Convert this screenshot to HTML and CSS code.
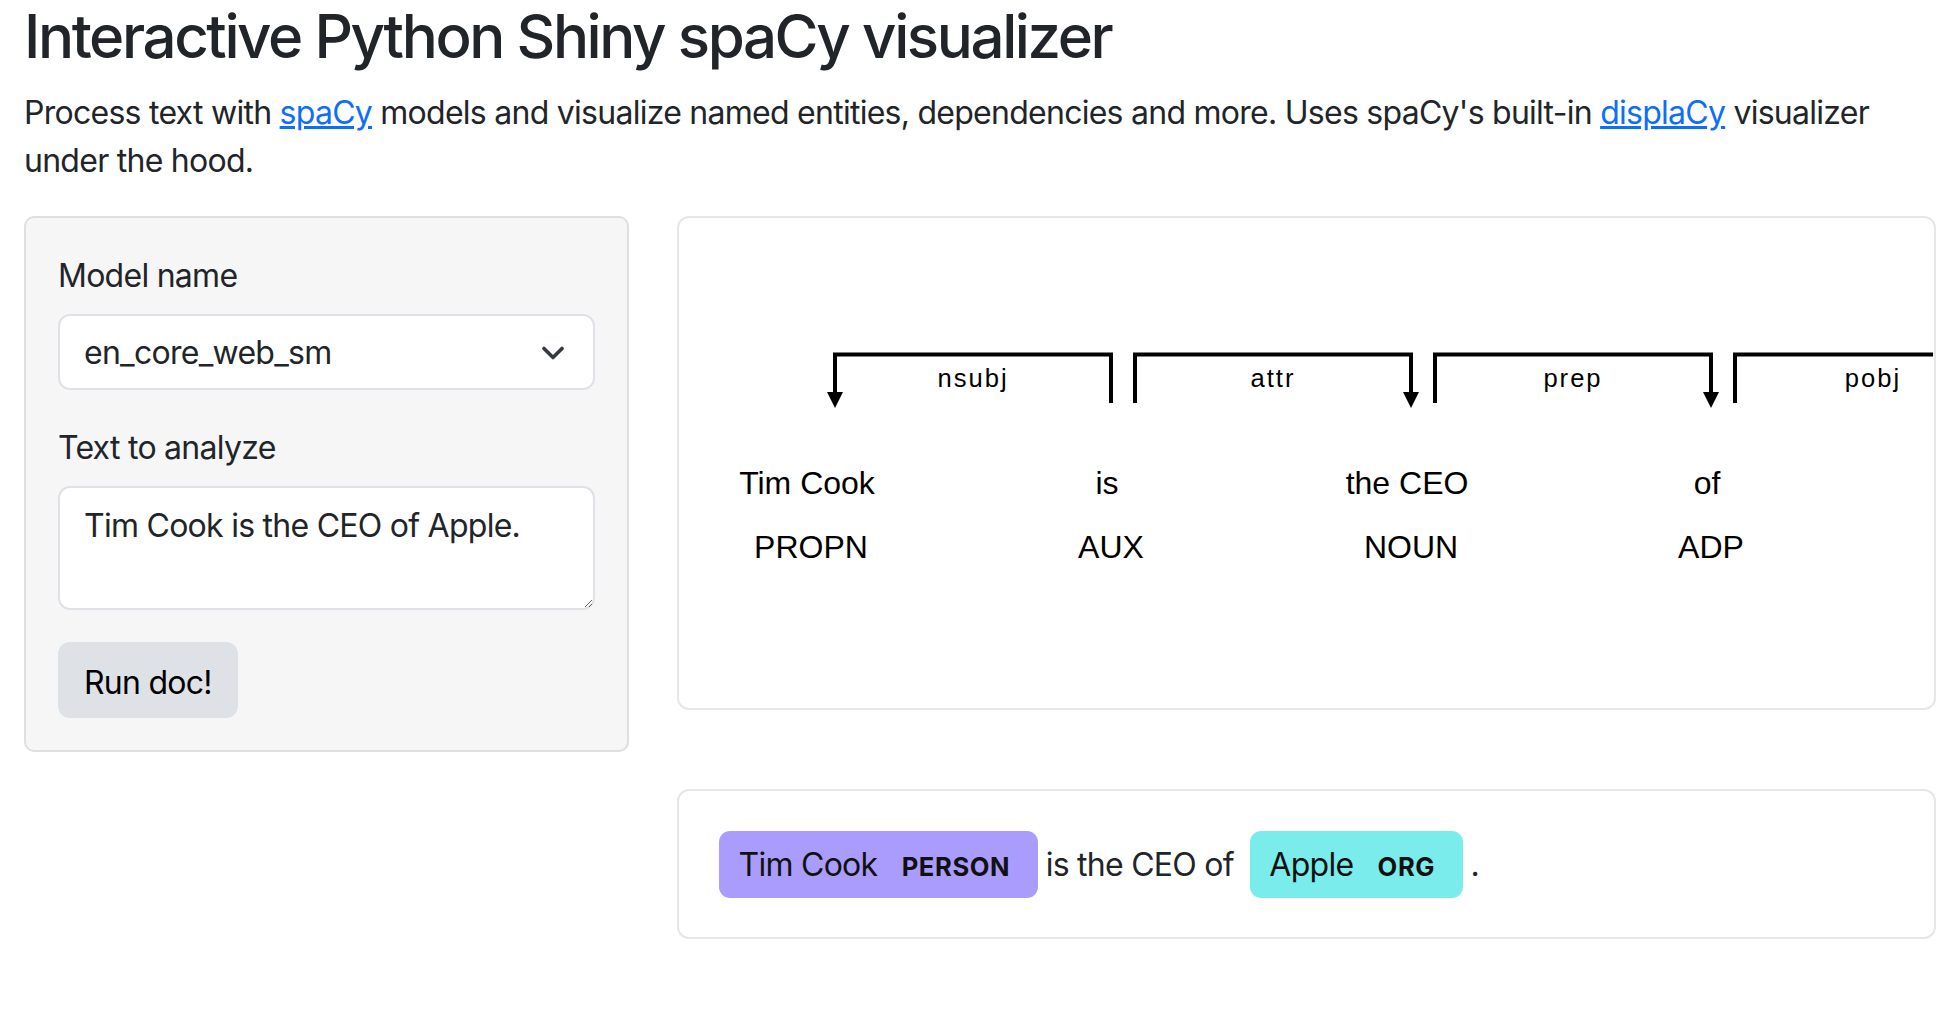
FILE: index.html
```html
<!DOCTYPE html>
<html lang="en">
<head>
<meta charset="utf-8">
<title>Interactive Python Shiny spaCy visualizer</title>
<link rel="stylesheet" href="styles.css">
</head>
<body>
<div class="container">
  <h2 class="title">Interactive Python Shiny spaCy visualizer</h2>
  <p class="intro">Process text with <a href="#">spaCy</a> models and visualize named entities, dependencies and more. Uses spaCy's built-in <a href="#">displaCy</a> visualizer under the hood.</p>
  <div class="row">
    <div class="col-side">
      <div class="well">
        <div class="form-group">
          <label class="control-label">Model name</label>
          <div class="select">
            <span>en_core_web_sm</span>
            <svg class="chevron" width="24" height="14" viewBox="0 0 24 14"><path d="M3 2.5 L12 11.5 L21 2.5" fill="none" stroke="#343a40" stroke-width="3.6" stroke-linecap="round" stroke-linejoin="round"/></svg>
          </div>
        </div>
        <div class="form-group">
          <label class="control-label">Text to analyze</label>
          <textarea class="textarea">Tim Cook is the CEO of Apple.</textarea>
        </div>
        <button class="btn">Run doc!</button>
      </div>
    </div>
    <div class="col-main">
      <div class="card dep-card">
        <svg class="dep" width="1222" height="426" viewBox="0 0 1222 426">
          <g class="words">
            <text x="96" y="244">Tim Cook</text>
            <text x="100" y="308">PROPN</text>
            <text x="396" y="244">is</text>
            <text x="400" y="308">AUX</text>
            <text x="696" y="244">the CEO</text>
            <text x="700" y="308">NOUN</text>
            <text x="996" y="244">of</text>
            <text x="1000" y="308">ADP</text>
          </g>
          <g class="arcs">
            <path d="M124,152 L124,104.5 L400,104.5 L400,153"/>
            <path d="M424,153 L424,104.5 L700,104.5 L700,152"/>
            <path d="M724,153 L724,104.5 L1000,104.5 L1000,152"/>
            <path d="M1024,153 L1024,104.5 L1300,104.5 L1300,152"/>
          </g>
          <g class="heads">
            <path d="M124,158 L116,142 L132,142 Z"/>
            <path d="M700,158 L692,142 L708,142 Z"/>
            <path d="M1000,158 L992,142 L1008,142 Z"/>
          </g>
          <g class="labels">
            <text x="262" y="137">nsubj</text>
            <text x="562" y="137">attr</text>
            <text x="862" y="137">prep</text>
            <text x="1162" y="137">pobj</text>
          </g>
        </svg>
      </div>
      <div class="card ent-card">
        <div class="entities"><mark class="ent ent-person">Tim Cook <span class="ent-label">PERSON</span> </mark>is the CEO of <mark class="ent ent-org">Apple <span class="ent-label">ORG</span> </mark>.</div>
      </div>
    </div>
  </div>
</div>
</body>
</html>
```

FILE: styles.css
```css
* { box-sizing: border-box; }
html, body { margin: 0; padding: 0; background: #fff; }
body {
  font-family: Inter, "Noto Sans", sans-serif;
  font-size: 32px;
  line-height: 1.5;
  letter-spacing: -0.023em;
  color: #212529;
}
.container { padding: 0 24px; }
.title {
  margin: 0 0 16px;
  font-size: 60px;
  font-weight: 500;
  line-height: 1.2;
  letter-spacing: -0.04em;
}
.intro { margin: 0 0 32px; padding-top: 1px; height: 96px; }
.intro a { color: #0d6efd; text-decoration: underline; }
.row {
  display: grid;
  grid-template-columns: minmax(0, 1fr) minmax(0, 2fr);
  margin: 0 -24px;
}
.col-side, .col-main { padding: 0 24px; min-width: 0; }
.well {
  background: #f6f6f6;
  border: 2px solid #dfdfdf;
  border-radius: 10px;
  padding: 32px;
}
.form-group { margin-bottom: 32px; }
.control-label { display: block; padding-top: 2px; margin-bottom: 14px; }
.select {
  display: flex;
  align-items: center;
  justify-content: space-between;
  height: 76px;
  padding: 13px 28px 11px 24px;
  background: #fff;
  border: 2px solid #dee2e6;
  border-radius: 12px;
  color: #212529;
}
.chevron { display: block; }
.textarea {
  display: block;
  width: 100%;
  height: 124px;
  padding: 14px 24px 10px;
  font: inherit;
  letter-spacing: inherit;
  color: #212529;
  background: #fff;
  border: 2px solid #dee2e6;
  border-radius: 12px;
  resize: vertical;
}
.btn {
  display: block;
  height: 76px;
  padding: 15px 26px 9px;
  font: inherit;
  letter-spacing: inherit;
  color: #000;
  background: #dee2e6;
  border: 0;
  border-radius: 12px;
}
.card {
  background: #fff;
  border: 2px solid #e5e7eb;
  border-radius: 12px;
  padding: 32px;
  overflow: hidden;
}
.dep-card { margin-bottom: 79px; }
.dep { display: block; overflow: hidden; }
.dep text {
  font-family: "Liberation Sans", Arial, sans-serif;
  fill: #000;
  text-anchor: middle;
  letter-spacing: 0;
}
.words text { font-size: 32px; }
.labels text { font-size: 25.6px; letter-spacing: 2px; }
.arcs path { fill: none; stroke: #000; stroke-width: 4; }
.heads path { fill: #000; }
.entities { line-height: 2.5; direction: ltr; padding-top: 2px; }
.ent {
  padding: 0.45em 0.6em;
  margin: 0 0.25em;
  line-height: 1;
  border-radius: 0.35em;
  color: #111;
}
.ent-person { background: #aa9cfc; }
.ent-org { background: #7aecec; }
.ent-label {
  font-size: 0.8em;
  font-weight: 700;
  line-height: 1;
  vertical-align: middle;
  margin-left: 16px;
  text-transform: uppercase;
  letter-spacing: 0.6px;
}
```
